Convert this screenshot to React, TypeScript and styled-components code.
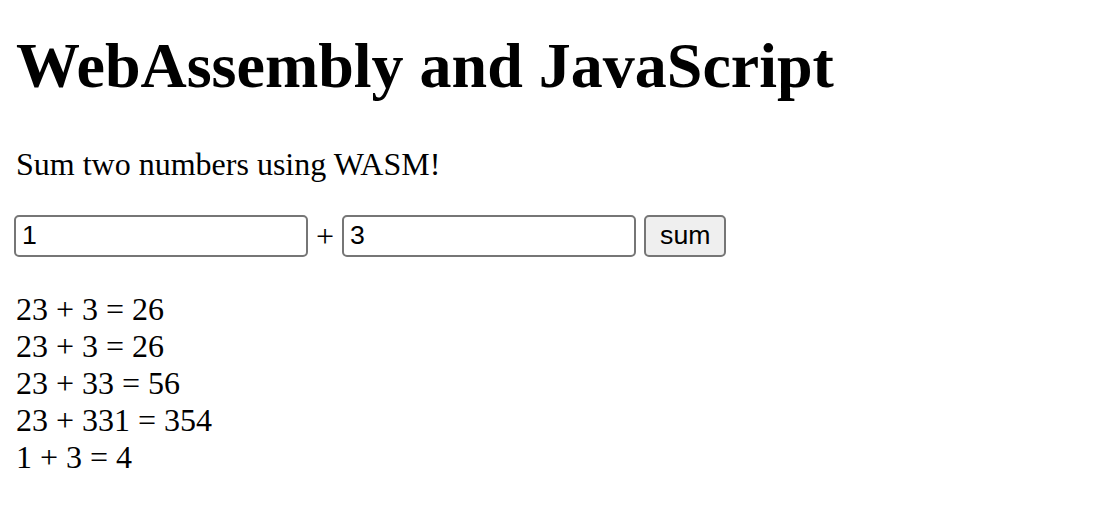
import React, { useState } from "react";
import styled, { createGlobalStyle } from "styled-components";

const Global = createGlobalStyle`
  html, body { background: #fff; }
  body {
    margin: 0;
    font-family: "Liberation Serif", "Times New Roman", serif;
    font-size: 32px;
    color: #000;
  }
`;

const Page = styled.main`
  padding: 29px 16px 16px;
`;

const Title = styled.h1`
  font-size: 64px;
  font-weight: bold;
  margin: 0 0 42.88px;
  line-height: normal;
`;

const Lead = styled.p`
  margin: 0 0 32px;
  line-height: normal;
`;

const FormRow = styled.div`
  display: flex;
  align-items: center;
  gap: 8px;
  margin-left: -2px;
`;

const NumberInput = styled.input`
  box-sizing: border-box;
  width: 294px;
  height: 42px;
  border: 2px solid #767676;
  border-radius: 5px;
  padding: 2px 6px;
  font-family: "Liberation Sans", Arial, sans-serif;
  font-size: 26.67px;
  color: #000;
  background: #fff;
  outline: none;
`;

const Plus = styled.span`
  line-height: 1;
`;

const SumButton = styled.button`
  box-sizing: border-box;
  height: 42px;
  padding: 0 14px;
  border: 2px solid #767676;
  border-radius: 5px;
  background: #efefef;
  font-family: "Liberation Sans", Arial, sans-serif;
  font-size: 26.67px;
  color: #000;
`;

const Results = styled.div`
  margin-top: 34px;
  line-height: normal;
`;

const ResultLine = styled.div``;

export default function App() {
  const [a, setA] = useState("1");
  const [b, setB] = useState("3");
  const lines = ["23 + 3 = 26", "23 + 3 = 26", "23 + 33 = 56", "23 + 331 = 354", "1 + 3 = 4"];
  return (
    <>
      <Global />
      <Page>
        <Title>WebAssembly and JavaScript</Title>
        <Lead>Sum two numbers using WASM!</Lead>
        <FormRow>
          <NumberInput value={a} onChange={(e) => setA(e.target.value)} />
          <Plus>+</Plus>
          <NumberInput value={b} onChange={(e) => setB(e.target.value)} />
          <SumButton>sum</SumButton>
        </FormRow>
        <Results>
          {lines.map((l, i) => (
            <ResultLine key={i}>{l}</ResultLine>
          ))}
        </Results>
      </Page>
    </>
  );
}
